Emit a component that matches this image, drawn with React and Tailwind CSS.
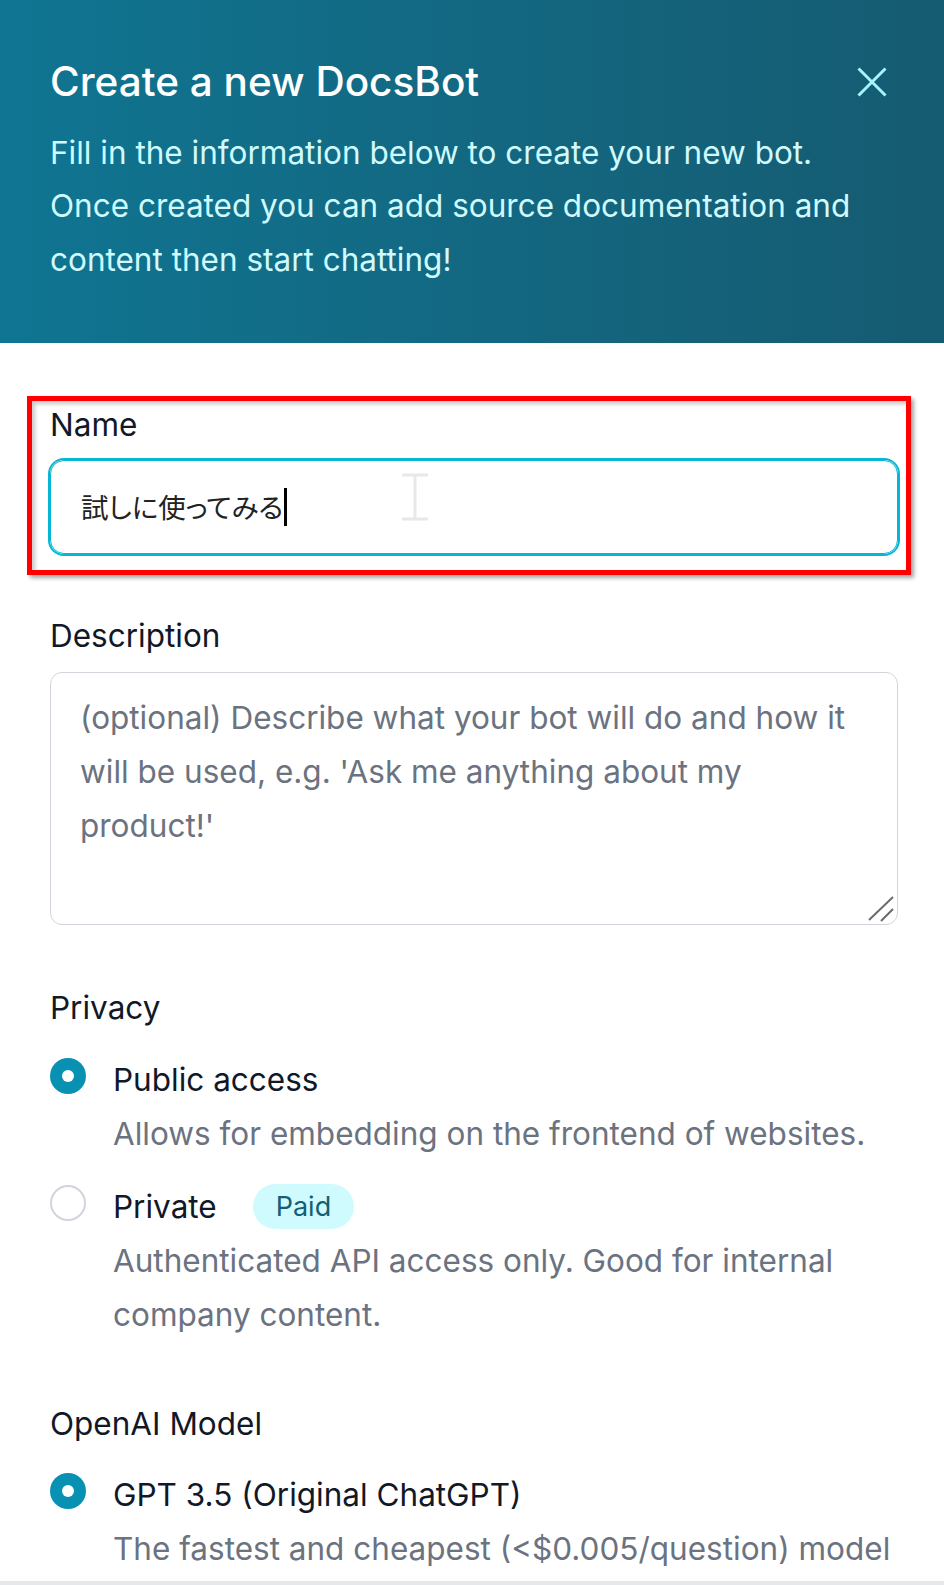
import React from 'react';

const font = { fontFamily: 'Inter, "Noto Sans", sans-serif' };

const Radio = ({ checked }) =>
    checked ? (
        <span className="mt-[5px] flex h-[36px] w-[36px] shrink-0 items-center justify-center rounded-full bg-[#0891b2]">
            <span className="h-[12px] w-[12px] rounded-full bg-white"></span>
        </span>
    ) : (
        <span className="mt-[5px] h-[36px] w-[36px] shrink-0 rounded-full border-2 border-[#d1d5db] bg-white"></span>
    );

const Option = ({ checked, title, badge, children }) => (
    <div className="flex items-start">
        <Radio checked={checked} />
        <div className="ml-[27px]">
            <div className="flex items-center">
                <span className="text-[31.5px] leading-[54px] text-[#111827]">{title}</span>
                {badge && (
                    <span className="ml-[36px] inline-flex h-[45px] items-center rounded-full bg-[#cffafe] px-[23px] text-[27px] text-[#155e75]">
                        {badge}
                    </span>
                )}
            </div>
            <p className="text-[31.5px] leading-[54px] text-[#6b7280]">{children}</p>
        </div>
    </div>
);

const Label = ({ children }) => (
    <label className="block text-[31.5px] leading-[40px] text-[#111827]">{children}</label>
);

export default function App() {
    return (
        <div className="flex h-[1585px] w-[944px] flex-col overflow-hidden bg-white" style={font}>
            {/* Header */}
            <div className="bg-linear-to-r from-[#0f7592] to-[#155b71] px-[50px] pb-[57px] pt-[54px]">
                <div className="flex h-[56px] items-center justify-between">
                    <h2 className="text-[40.5px] font-medium leading-[56px] text-white">Create a new DocsBot</h2>
                    <button className="mr-[7px] text-[#a5f3fc]">
                        <svg width="30" height="30" viewBox="0 0 30 30" fill="none" stroke="currentColor" strokeWidth="3">
                            <path d="M1.5 1.5L28.5 28.5M28.5 1.5L1.5 28.5" />
                        </svg>
                    </button>
                </div>
                <p className="mt-[16px] text-[31.5px] leading-[53.3px] text-[#cffafe]">
                    Fill in the information below to create your new bot.
                    <br />
                    Once created you can add source documentation and
                    <br />
                    content then start chatting!
                </p>
            </div>

            {/* Form */}
            <div className="flex-1 pl-[50px] pr-[46px] pt-[62px]">
                <div className="relative">
                    <div className="pointer-events-none absolute -bottom-[21px] -left-[23px] -right-[13px] -top-[9px] border-[5px] border-[#ff0000] shadow-[3px_3px_4px_rgba(0,0,0,0.35),inset_3px_3px_4px_rgba(0,0,0,0.22)]"></div>
                    <Label>Name</Label>
                    <div className="relative mt-[15px] flex h-[94px] items-center rounded-[14px] border border-[#06b6d4] pl-[30px] ring-2 ring-[#06b6d4]">
                        <span
                            className="text-[27.5px] text-[#222222] [font-feature-settings:'palt']"
                            style={{ fontFamily: '"Noto Sans CJK JP", sans-serif' }}
                        >
                            試しに使ってみる
                        </span>
                        <span className="ml-[1px] inline-block h-[38px] w-[3px] bg-black"></span>
                        <svg className="absolute left-[350px] top-[12px]" width="28" height="48" viewBox="0 0 28 48" fill="none" stroke="#e8e8e8" strokeWidth="3">
                            <path d="M1 2H27M14 2V46M1 46H27" />
                        </svg>
                    </div>
                </div>

                <div className="mt-[62px]">
                    <Label>Description</Label>
                    <div className="relative mt-[16px] h-[253px] rounded-[12px] border-[1.5px] border-[#d1d5db] pl-[29px] pt-[18px] text-[31.5px] leading-[54px] text-[#6b7280]">
                        (optional) Describe what your bot will do and how it
                        <br />
                        will be used, e.g. 'Ask me anything about my
                        <br />
                        product!'
                        <svg className="absolute bottom-[2px] right-[3px]" width="26" height="26" viewBox="0 0 26 26" fill="none" stroke="#6b6b6b" strokeWidth="2">
                            <path d="M1 24L25 1M13 25L25 13" />
                        </svg>
                    </div>
                </div>

                <div className="mt-[63px]">
                    <Label>Privacy</Label>
                    <div className="mt-[25px] flex flex-col gap-[19px]">
                        <Option checked title="Public access">
                            Allows for embedding on the frontend of websites.
                        </Option>
                        <Option title="Private" badge="Paid">
                            Authenticated API access only. Good for internal
                            <br />
                            company content.
                        </Option>
                    </div>
                </div>

                <div className="mt-[62px]">
                    <Label>OpenAI Model</Label>
                    <div className="mt-[24px] flex flex-col gap-[19px]">
                        <Option checked title="GPT 3.5 (Original ChatGPT)">
                            The fastest and cheapest (&lt;$0.005/question) model
                        </Option>
                    </div>
                </div>
            </div>

            <div className="h-[4px] bg-[#e5e7eb]"></div>
        </div>
    );
}
